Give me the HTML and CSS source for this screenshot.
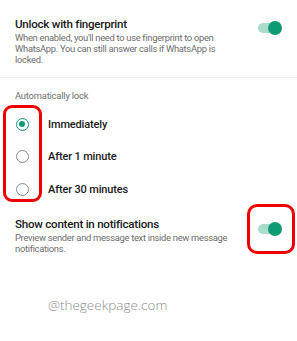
FILE: index.html
```html
<!DOCTYPE html>
<html>
<head>
<meta charset="utf-8">
<link rel="stylesheet" href="styles.css">
</head>
<body>
<div class="screen">
  <div class="setting first">
    <div class="texts">
      <div class="title">Unlock with fingerprint</div>
      <div class="desc">When enabled, you'll need to use fingerprint to open WhatsApp. You can still answer calls if WhatsApp is locked.</div>
    </div>
    <div class="toggle"><span class="knob"></span></div>
  </div>
  <div class="divider"></div>
  <div class="group">
    <div class="group-label">Automatically lock</div>
    <div class="radios">
      <div class="radio-row r1"><span class="radio on"></span><span class="rlabel">Immediately</span></div>
      <div class="radio-row"><span class="radio"></span><span class="rlabel">After 1 minute</span></div>
      <div class="radio-row"><span class="radio"></span><span class="rlabel">After 30 minutes</span></div>
      <div class="mark mark-radios"></div>
    </div>
  </div>
  <div class="setting second">
    <div class="texts">
      <div class="title">Show content in notifications</div>
      <div class="desc">Preview sender and message text inside new message notifications.</div>
    </div>
    <div class="toggle t2"><span class="knob"></span><div class="mark mark-toggle"></div></div>
  </div>
  <div class="watermark">@thegeekpage.com</div>
</div>
</body>
</html>
```
FILE: styles.css
```css
html, body {
  margin: 0;
  padding: 0;
  background: #ffffff;
}
.screen {
  width: 297px;
  height: 341px;
  font-family: Roboto, "Noto Sans", sans-serif;
  color: #1b1b1b;
  overflow: hidden;
}
.setting {
  display: flex;
  padding: 0 15px;
}
.setting.first {
  padding-top: 16px;
  padding-bottom: 12px;
}
.setting.second {
  padding-top: 10px;
}
.texts {
  width: 228px;
}
.title {
  font-size: 11.6px;
  line-height: 16px;
  font-weight: 500;
  letter-spacing: -0.25px;
  color: #1a1a1a;
}
.desc {
  font-size: 9.4px;
  line-height: 11px;
  letter-spacing: -0.3px;
  color: #6e6e6e;
}
.toggle {
  position: relative;
  margin-left: auto;
  margin-right: 2px;
  margin-top: 7px;
  width: 22px;
  height: 10px;
  border-radius: 5px;
  background: #a9dccb;
  flex: none;
}
.knob {
  position: absolute;
  right: -2px;
  top: -2px;
  width: 14px;
  height: 14px;
  border-radius: 50%;
  background: #0f9a76;
}
.t2 {
  margin-top: 8px;
}
.divider {
  height: 1px;
  background: #f1f1f1;
}
.group {
  padding-top: 12px;
}
.group-label {
  padding-left: 15px;
  font-size: 9.4px;
  line-height: 12px;
  letter-spacing: -0.2px;
  color: #6e6e6e;
}
.radios {
  position: relative;
  margin-top: 6px;
}
.radio-row {
  display: flex;
  align-items: center;
  height: 32.5px;
  padding-left: 16px;
}
.radio {
  box-sizing: border-box;
  width: 13px;
  height: 13px;
  border: 1.6px solid #858c91;
  border-radius: 50%;
  position: relative;
  flex: none;
}
.radio.on {
  border-color: #0f9a76;
}
.radio.on::after {
  content: "";
  position: absolute;
  left: 2px;
  top: 2px;
  width: 6px;
  height: 6px;
  border-radius: 50%;
  background: #0f9a76;
}
.rlabel {
  margin-left: 19px;
  font-size: 11px;
  font-weight: 500;
  letter-spacing: -0.15px;
  color: #1a1a1a;
}
.mark {
  position: absolute;
  box-sizing: border-box;
  border: 3px solid #ec0000;
}
.mark-radios {
  left: 3px;
  top: -3px;
  width: 39px;
  height: 97px;
  border-radius: 9px;
}
.mark-toggle {
  left: -11px;
  top: -20px;
  width: 48px;
  height: 50px;
  border-radius: 10px;
}
.watermark {
  margin-top: 43px;
  padding-left: 48px;
  font-family: "Open Sans", sans-serif;
  font-weight: 300;
  font-size: 13.5px;
  line-height: 16px;
  color: #8d8d8d;
}
```
